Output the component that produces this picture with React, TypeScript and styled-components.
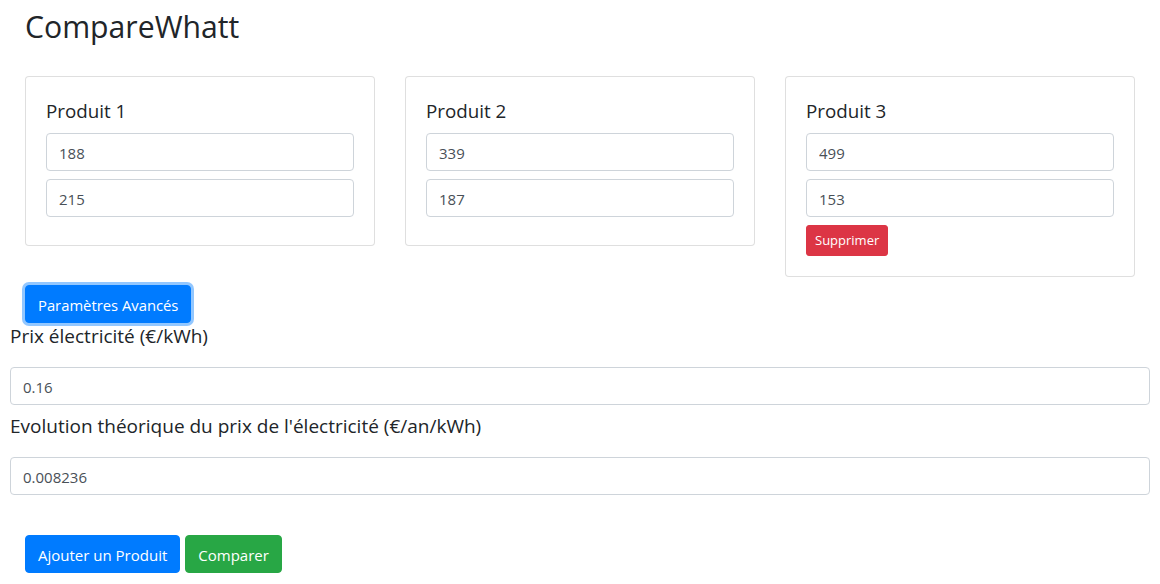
import React from "react";
import styled, { createGlobalStyle } from "styled-components";

const GlobalStyle = createGlobalStyle`
  html, body { margin: 0; padding: 0; background: #fff; }
  body {
    font-family: "Open Sans", "Noto Sans", "Liberation Sans", sans-serif;
    font-size: 15px;
    line-height: 1.5;
    color: #212529;
  }
  * { box-sizing: border-box; }
`;

const Page = styled.div`
  padding: 0 10px;
`;

const Header = styled.header`
  padding: 0 15px;
`;

const Title = styled.h2`
  font-size: 30.2px;
  font-weight: 400;
  line-height: 38px;
  margin: 8px 0 30px;
`;

const CardRow = styled.div`
  display: grid;
  grid-template-columns: repeat(3, 1fr);
  align-items: start;
`;

const Col = styled.div`
  padding: 0 15px;
`;

const Card = styled.div`
  border: 1px solid rgba(0, 0, 0, 0.125);
  border-radius: 4px;
  padding: 20px;
  background: #fff;
`;

const CardTitle = styled.h5`
  font-size: 18.8px;
  font-weight: 400;
  line-height: 24px;
  padding-top: 2px;
  margin: 0 0 10px;
`;

const Input = styled.input`
  display: block;
  width: 100%;
  height: 38px;
  padding: 7px 12px 5px;
  font-family: inherit;
  font-size: 15px;
  line-height: 24px;
  color: #495057;
  background: #fff;
  border: 1px solid #ced4da;
  border-radius: 4px;
  margin: 0 0 8px;
  outline: none;
`;

const colors = { primary: "#007bff", success: "#28a745", danger: "#dc3545" };

const Button = styled.button<{
  $variant: "primary" | "success" | "danger";
  $small?: boolean;
  $focused?: boolean;
}>`
  display: inline-block;
  font-family: inherit;
  font-weight: 400;
  color: #fff;
  cursor: pointer;
  background: ${(p) => colors[p.$variant]};
  border: 1px solid ${(p) => colors[p.$variant]};
  font-size: ${(p) => (p.$small ? "13px" : p.$focused ? "14.8px" : "15px")};
  line-height: ${(p) => (p.$small ? "21px" : "24px")};
  height: ${(p) => (p.$small ? "31px" : "38px")};
  padding: ${(p) => (p.$small ? "4px 8px" : "7px 12px 5px")};
  border-radius: ${(p) => (p.$small ? "3px" : "4px")};
  box-shadow: ${(p) => (p.$focused ? "0 0 0 3px rgba(38, 143, 255, 0.5)" : "none")};
`;

const AdvancedBar = styled.div`
  padding: 0 15px;
  margin-top: 8px;
`;

const Field = styled.div`
  display: flex;
  flex-direction: column;
`;

const Label = styled.p`
  font-size: 19px;
  line-height: 27px;
  margin: 0 0 17px;
`;

const Actions = styled.div`
  display: flex;
  gap: 5px;
  padding: 32px 15px 0;
`;

const products = [
  { name: "Produit 1", values: ["188", "215"], removable: false },
  { name: "Produit 2", values: ["339", "187"], removable: false },
  { name: "Produit 3", values: ["499", "153"], removable: true },
];

export default function App() {
  return (
    <>
      <GlobalStyle />
      <Page>
        <Header>
          <Title>CompareWhatt</Title>
        </Header>
        <CardRow>
          {products.map((p) => (
            <Col key={p.name}>
              <Card>
                <CardTitle>{p.name}</CardTitle>
                {p.values.map((v, i) => (
                  <Input key={i} type="text" defaultValue={v} />
                ))}
                {p.removable && (
                  <Button $variant="danger" $small>
                    Supprimer
                  </Button>
                )}
              </Card>
            </Col>
          ))}
        </CardRow>
        <AdvancedBar>
          <Button $variant="primary" $focused>
            Paramètres Avancés
          </Button>
        </AdvancedBar>
        <Field>
          <Label>Prix électricité (€/kWh)</Label>
          <Input type="text" defaultValue="0.16" />
        </Field>
        <Field>
          <Label>Evolution théorique du prix de l'électricité (€/an/kWh)</Label>
          <Input type="text" defaultValue="0.008236" />
        </Field>
        <Actions>
          <Button $variant="primary">Ajouter un Produit</Button>
          <Button $variant="success">Comparer</Button>
        </Actions>
      </Page>
    </>
  );
}
